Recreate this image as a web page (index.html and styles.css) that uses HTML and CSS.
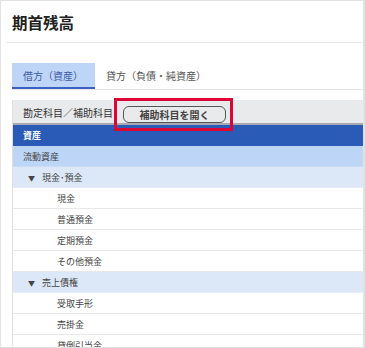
FILE: index.html
```
<!DOCTYPE html>
<html>
<head>
	<meta charset="utf-8"/>
	<title>期首残高</title>
	<link rel="stylesheet" href="styles.css">
</head>
<body>
	<div class="frame">
		<h1 class="title">期首残高</h1>
		<div class="tabs">
			<div class="tab active">借方（資産）</div>
			<div class="tab">貸方（負債・純資産）</div>
		</div>
		<div class="table">
			<div class="thead">
				<span>勘定科目／補助科目</span>
				<button class="open">補助科目を開く</button>
				<div class="mark"></div>
			</div>
			<div class="row top">資産</div>
			<div class="row group">流動資産</div>
			<div class="row sub"><span class="tri">▼</span>現金･預金</div>
			<div class="row item">現金</div>
			<div class="row item">普通預金</div>
			<div class="row item">定期預金</div>
			<div class="row item">その他預金</div>
			<div class="row sub"><span class="tri">▼</span>売上債権</div>
			<div class="row item">受取手形</div>
			<div class="row item">売掛金</div>
			<div class="row item">貸倒引当金</div>
		</div>
	</div>
</body>
</html>
```
FILE: styles.css
```
html, body{margin: 0;}
body{font-family: "Noto Sans CJK JP", "Noto Sans", sans-serif; color: #333;}
.frame{width: 365px;height: 348px;box-sizing: border-box;border: 1px solid #e2e2e2;border-right-width: 2px;overflow: hidden;}
.title{margin: 0 0 0 5px;padding-left: 6px;height: 41px;line-height: 43px;font-size: 15.5px;font-weight: bold;color: #222;border-bottom: 1px solid #e8e8e8;}
.tabs{display: flex;margin: 20px 0 0 11px;border-bottom: 1px solid #e6e6e6;}
.tab{height: 24px;line-height: 26px;padding: 0 12px 0 11px;font-size: 10px;color: #555;border-bottom: 2px solid transparent;}
.tab.active{background-color: #bed5f7;border-bottom-color: #3e5fc2;color: #3b5aa8;}
.table{margin: 10px 0 0 11px;border-left: 1px solid #e0e0e0;}
.thead{position: relative;display: flex;align-items: center;height: 23px;padding-left: 10px;background-color: #e9eaeb;border-bottom: 2px solid #a7abb1;font-size: 10px;}
.thead span{padding-top: 1px;}
.open{margin: 6px 0 0 10px;width: 103px;height: 17px;padding: 0;border: 1.5px solid #555;border-radius: 6px;background: #fff0;font-family: inherit;font-size: 10px;font-weight: bold;color: #444;line-height: 13px;}
.mark{position: absolute;left: 101px;top: -2px;width: 113px;height: 27px;border: 3px solid #dc0533;}
.row{height: 20px;line-height: 21px;padding-left: 10px;font-size: 9px;color: #444;border-bottom: 1px solid #e8e8e8;}
.row.top{height: 21px;background-color: #2a5bb6;color: #fff;font-weight: bold;border-bottom: none;}
.row.group{background-color: #bdd5f7;border-bottom-color: #c9dcf5;}
.row.sub{padding-left: 15px;background-color: #dce8f8;border-bottom-color: #e4ecf8;}
.tri{display: inline-block;width: 14px;font-size: 7px;}
.row.item{padding-left: 44px;}
```
